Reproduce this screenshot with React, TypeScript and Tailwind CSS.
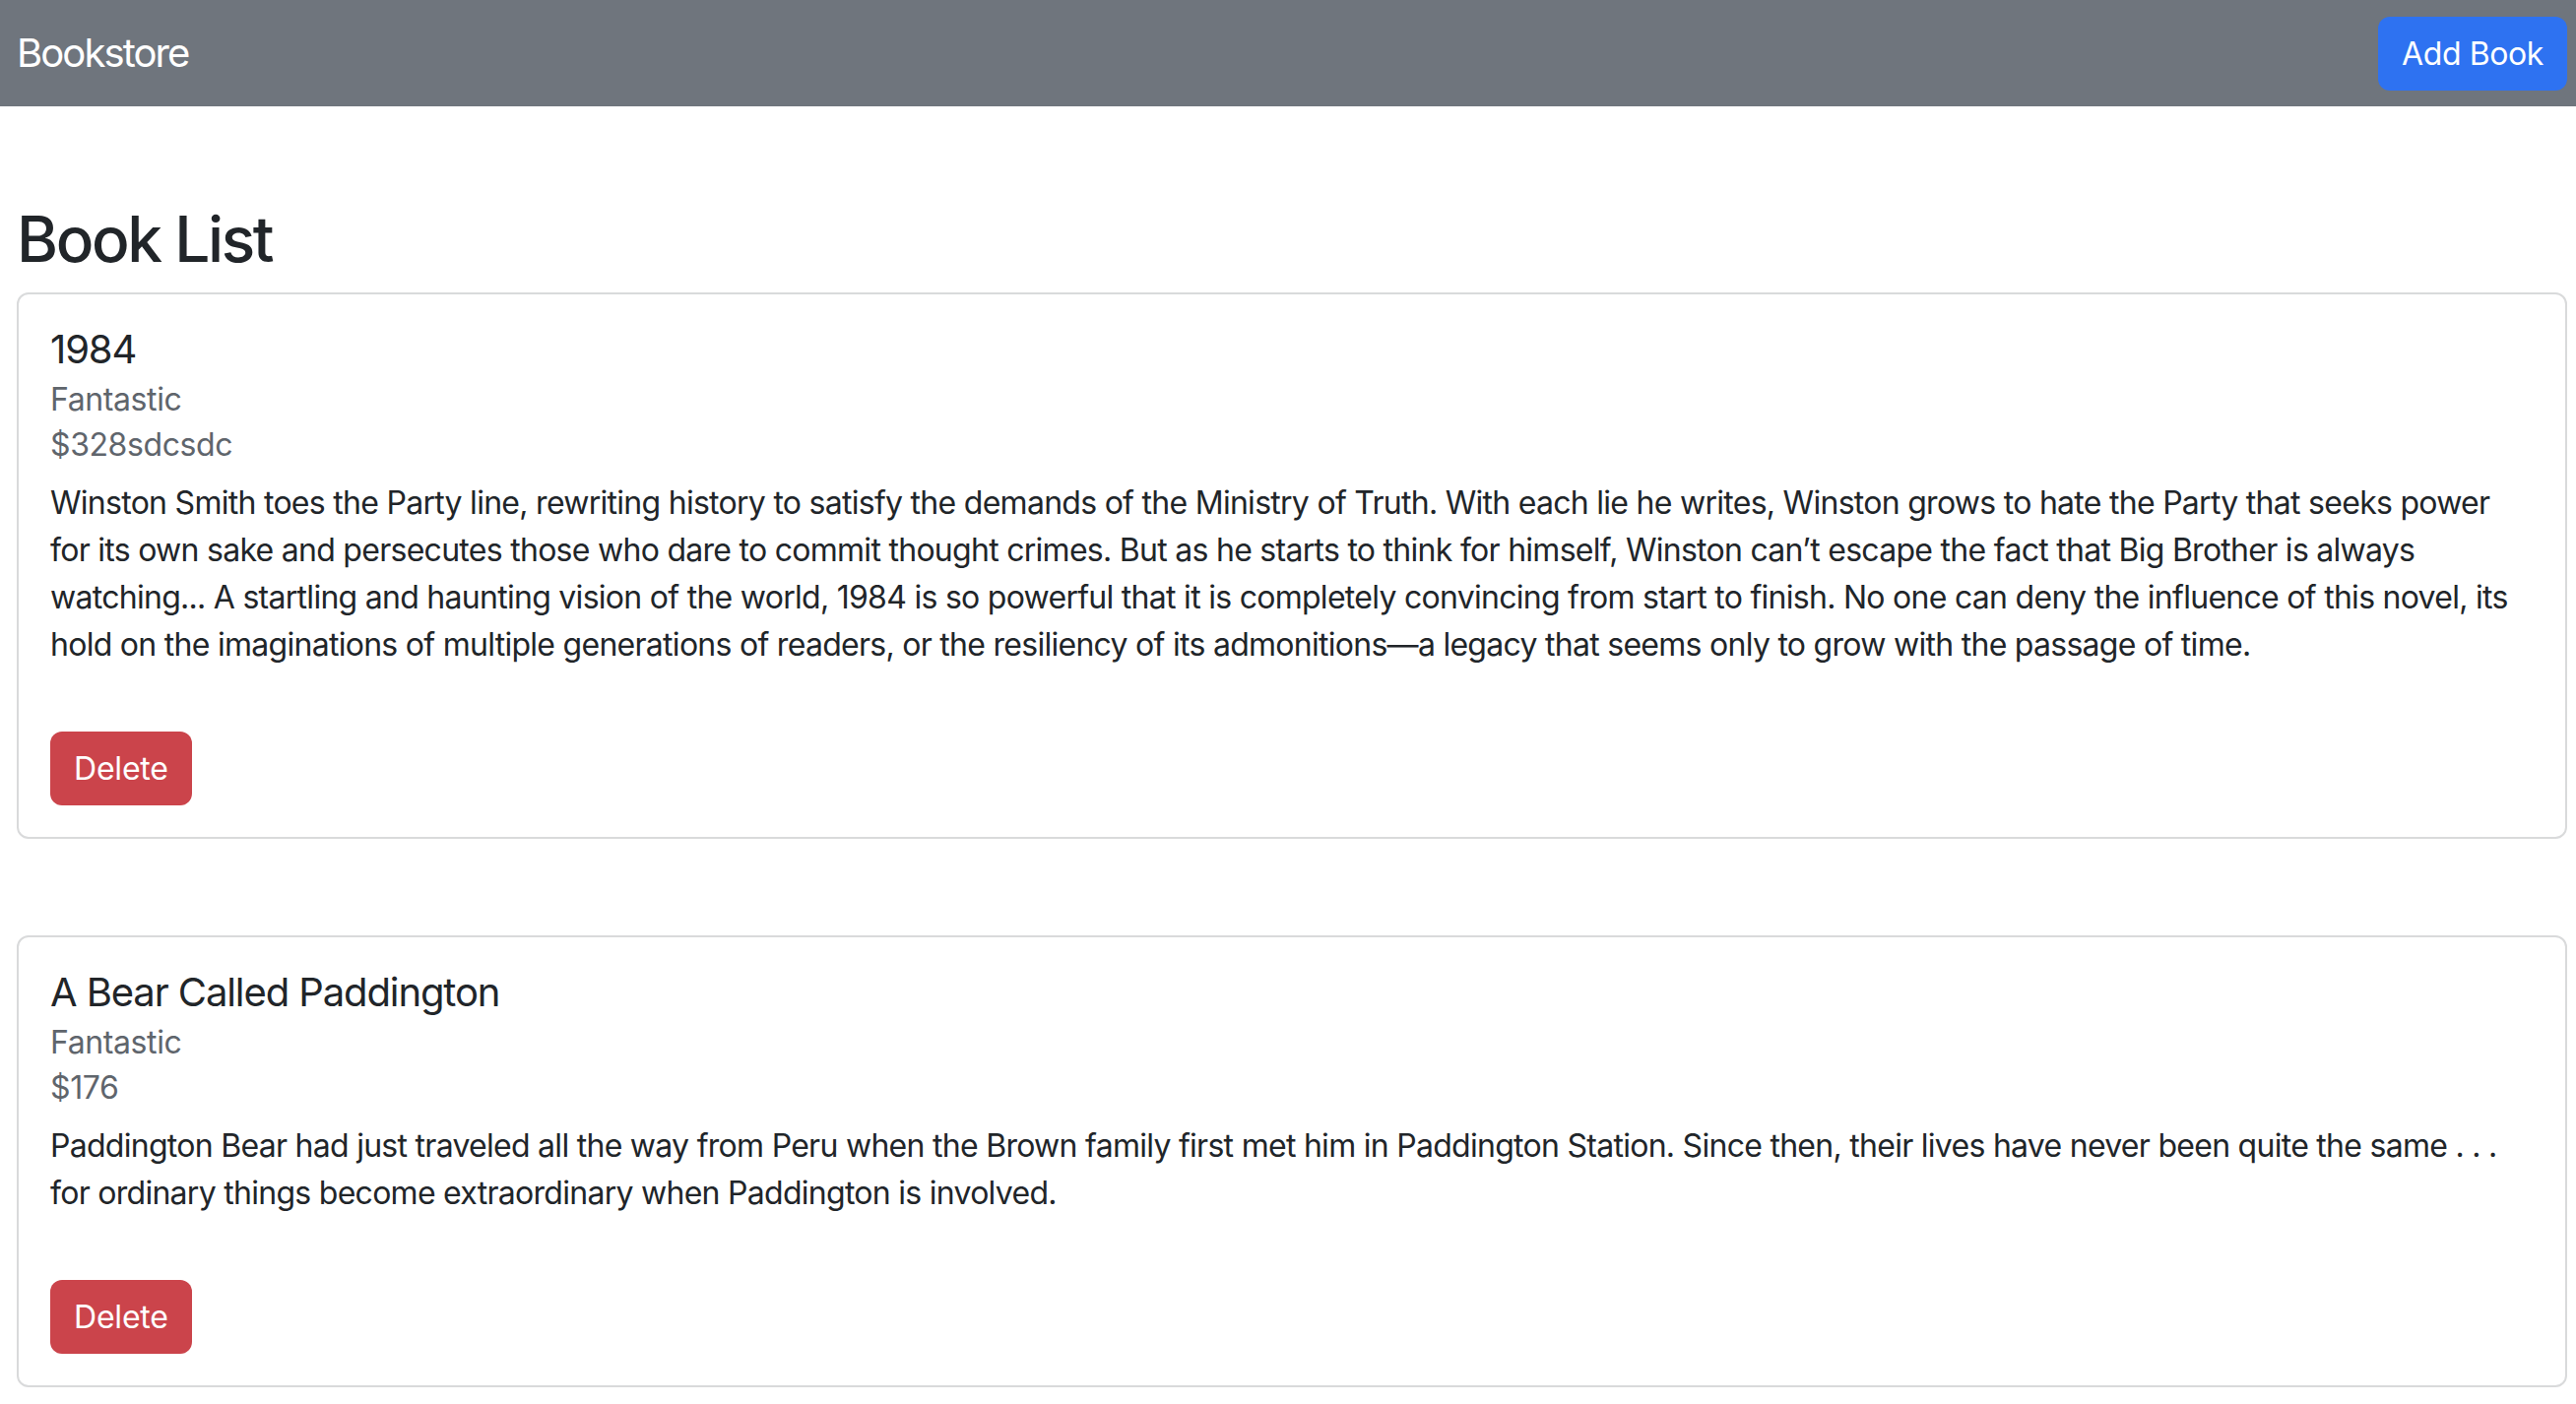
const books = [
	{
		id: 1,
		title: '1984',
		genre: 'Fantastic',
		price: '328sdcsdc',
		description:
			'Winston Smith toes the Party line, rewriting history to satisfy the demands of the Ministry of Truth. With each lie he writes, Winston grows to hate the Party that seeks power for its own sake and persecutes those who dare to commit thought crimes. But as he starts to think for himself, Winston can\u2019t escape the fact that Big Brother is always watching... A startling and haunting vision of the world, 1984 is so powerful that it is completely convincing from start to finish. No one can deny the influence of this novel, its hold on the imaginations of multiple generations of readers, or the resiliency of its admonitions\u2014a legacy that seems only to grow with the passage of time.',
	},
	{
		id: 2,
		title: 'A Bear Called Paddington',
		genre: 'Fantastic',
		price: '176',
		description:
			'Paddington Bear had just traveled all the way from Peru when the Brown family first met him in Paddington Station. Since then, their lives have never been quite the same . . . for ordinary things become extraordinary when Paddington is involved.',
	},
];

function BookCard({ book }: { book: (typeof books)[number] }) {
	return (
		<div className="mb-[98px] rounded-[12px] border-2 border-[#d9dadb] bg-white">
			<div className="p-[32px]">
				<h5 className="mb-[16px] text-[40px] leading-[48px] tracking-[-1.1px] text-[#212529]">{book.title}</h5>
				<h6 className="-mt-[8px] text-[32px] leading-[38px] tracking-[-0.4px] text-[#5f656c]">{book.genre}</h6>
				<h6 className="mt-[8px] text-[32px] leading-[38px] tracking-[-0.4px] text-[#5f656c]">${book.price}</h6>
				<p className="mt-[16px] text-[32px] leading-[48px] tracking-[-0.72px] text-[#212529]">{book.description}</p>
				<button className="mt-[64px] rounded-[12px] bg-[#cb444b] px-[24px] py-[12px] text-[32px] leading-[51px] tracking-[-0.2px] text-white">
					Delete
				</button>
			</div>
		</div>
	);
}

export default function App() {
	return (
		<div className="min-h-screen bg-white font-['Inter','Liberation_Sans',sans-serif]">
			{/* Navbar */}
			<nav className="flex h-[108px] items-center justify-between bg-[#6f757d] pl-[17px] pr-[9px]">
				<span className="text-[40px] leading-[60px] tracking-[-1.9px] text-white">Bookstore</span>
				<button className="rounded-[12px] bg-[#2e72f1] px-[24px] py-[12px] text-[32px] leading-[51px] tracking-[-0.4px] text-white">
					Add Book
				</button>
			</nav>

			<div className="pl-[17px] pr-[9px]">
				<h2 className="mt-[96px] mb-[16px] text-[64px] leading-[77px] font-medium tracking-[-2.4px] text-[#212529]">Book List</h2>
				{books.map((b) => (
					<BookCard key={b.id} book={b} />
				))}
			</div>
		</div>
	);
}
